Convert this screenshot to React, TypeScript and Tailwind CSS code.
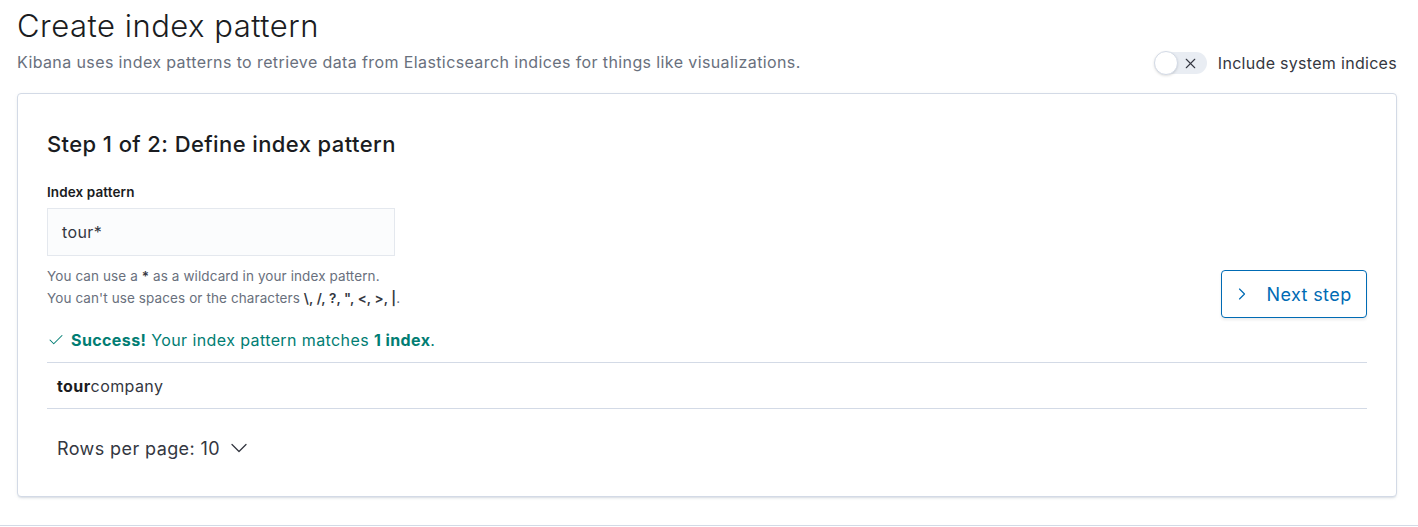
import { Check, ChevronDown, ChevronRight, X } from "lucide-react";

export default function App() {
  return (
    <div className="min-h-[527px] w-[1418px] bg-white font-['Inter',sans-serif] text-[#1a1c21]">
      <div className="border-b border-[#d3dae6] pb-[28px] pl-[17px] pr-[21px]">
        <div className="flex items-end justify-between">
          <div>
            <h1 className="pt-[4px] text-[31px] font-light leading-[44px] tracking-[0.5px] text-[#1a1c21]">
              Create index pattern
            </h1>
            <p className="mt-[2px] text-[16px] leading-[24px] tracking-[0.39px] text-[#69707d]">
              Kibana uses index patterns to retrieve data from Elasticsearch indices for things like visualizations.
            </p>
          </div>
          <label className="mb-[-1px] flex items-center gap-[11px]">
            <span className="relative flex h-[22px] w-[52px] items-center rounded-full bg-[#e9edf3]">
              <span className="absolute left-[-1px] top-[-1px] h-[24px] w-[24px] rounded-full border border-[#d3dae6] bg-white shadow-sm" />
              <X className="absolute right-[8px] size-[17px] text-[#343741]" strokeWidth={1.5} />
            </span>
            <span className="text-[16px] tracking-[0.3px] text-[#343741]">Include system indices</span>
          </label>
        </div>

        <section className="mt-[19px] rounded-[4px] border border-[#d3dae6] bg-white px-[29px] pb-[34px] pt-[33px] shadow-[0_2px_2px_-1px_rgba(152,162,179,0.3),0_1px_5px_-2px_rgba(152,162,179,0.3)]">
          <h2 className="text-[22px] font-medium leading-[34px] tracking-[0.4px] text-[#1a1c21]">
            Step 1 of 2: Define index pattern
          </h2>

          <div className="mt-[22px] flex items-end justify-between">
            <div>
              <div className="text-[13.5px] font-semibold leading-[18px] tracking-[0.1px] text-[#1a1c21]">Index pattern</div>
              <div className="mt-[7px] flex h-[48px] w-[348px] items-center border border-[#e4e8ee] bg-[#fbfcfd] px-[14px] text-[16px] tracking-[0.4px] text-[#343741]">
                tour*
              </div>
              <div className="mt-[9px] text-[13.5px] leading-[22px] tracking-[0.1px] text-[#69707d]">
                <div>
                  You can use a <strong className="font-semibold text-[#343741]">*</strong> as a wildcard in your index pattern.
                </div>
                <div>
                  You can't use spaces or the characters{" "}
                  <strong className="font-semibold text-[#343741]">\, /, ?, ", &lt;, &gt;, |</strong>.
                </div>
              </div>
            </div>
            <button className="mb-[-9px] flex h-[48px] w-[146px] items-center justify-center gap-[14px] rounded-[4px] border border-[#006bb4] bg-white pr-[4px] text-[18px] tracking-[0.4px] text-[#006bb4] shadow-[0_2px_3px_rgba(0,0,0,0.08)]">
              <ChevronRight className="size-[20px]" strokeWidth={1.4} />
              Next step
            </button>
          </div>

          <div className="mt-[19px] flex items-center gap-[6px] text-[16px] tracking-[0.4px] text-[#017d73]">
            <Check className="size-[18px]" strokeWidth={1.4} />
            <span>
              <strong className="font-bold">Success!</strong> Your index pattern matches{" "}
              <strong className="font-bold">1 index</strong>.
            </span>
          </div>

          <div className="mt-[10px] border-y border-[#d3dae6]">
            <div className="flex h-[45px] items-center px-[10px] text-[16px] tracking-[0.4px] text-[#343741]">
              <strong className="font-bold text-[#1a1c21]">tour</strong>company
            </div>
          </div>

          <div className="mt-[25px] flex items-center gap-[5px] px-[10px] text-[18px] tracking-[0.4px] text-[#343741]">
            Rows per page: 10
            <ChevronDown className="size-[28px]" strokeWidth={1.1} />
          </div>
        </section>
      </div>
    </div>
  );
}
